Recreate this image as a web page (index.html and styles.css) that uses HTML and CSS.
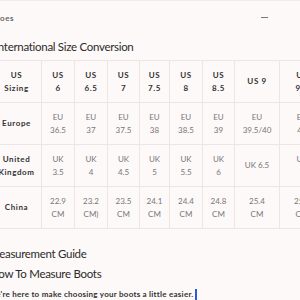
FILE: index.html
```html
<!DOCTYPE html>
<html>
<head>
<meta charset="utf-8">
<link rel="stylesheet" href="styles.css">
</head>
<body>
<div class="page">
  <div class="acc-head">
    <span class="acc-title">Shoes</span>
    <span class="minus"></span>
  </div>
  <h2 class="title t1">International Size Conversion</h2>
  <table class="sizes">
    <colgroup>
      <col style="width:50px"><col style="width:33px"><col style="width:33px"><col style="width:32px"><col style="width:30px"><col style="width:33px"><col style="width:32px"><col style="width:45px"><col style="width:45px">
    </colgroup>
    <tr class="hd">
      <th>US<br>Sizing</th><th>US<br>6</th><th>US<br>6.5</th><th>US<br>7</th><th>US<br>7.5</th><th>US<br>8</th><th>US<br>8.5</th><th>US 9</th><th>US<br>9.5</th>
    </tr>
    <tr>
      <th>Europe</th><td>EU<br>36.5</td><td>EU<br>37</td><td>EU<br>37.5</td><td>EU<br>38</td><td>EU<br>38.5</td><td>EU<br>39</td><td>EU<br>39.5/40</td><td>EU<br>40</td>
    </tr>
    <tr>
      <th>United<br>Kingdom</th><td>UK<br>3.5</td><td>UK<br>4</td><td>UK<br>4.5</td><td>UK<br>5</td><td>UK<br>5.5</td><td>UK<br>6</td><td>UK 6.5</td><td>UK<br>7</td>
    </tr>
    <tr>
      <th>China</th><td>22.9<br>CM</td><td>23.2<br>CM)</td><td>23.5<br>CM</td><td>24.1<br>CM</td><td>24.4<br>CM</td><td>24.8<br>CM</td><td>25.4<br>CM</td><td>25.7<br>CM</td>
    </tr>
  </table>
  <h2 class="title t2">Measurement Guide</h2>
  <h2 class="title t3">How To Measure Boots</h2>
  <p class="intro">We're here to make choosing your boots a little easier.<span class="caret"></span></p>
</div>
</body>
</html>
```
FILE: styles.css
```css
html, body {
  margin: 0;
  padding: 0;
  background: #fdf9f8;
  overflow: hidden;
}
body {
  width: 300px;
  height: 300px;
  font-family: Lato, "Open Sans", sans-serif;
}
.page {
  margin-left: -12px;
  width: 340px;
}
.acc-head {
  height: 34px;
  display: flex;
  align-items: center;
  justify-content: space-between;
  padding: 0 60px 0 2px;
  border-top: 1px solid #f1ebe9;
  box-sizing: border-box;
}
.acc-title {
  font-size: 8px;
  font-weight: 700;
  letter-spacing: 0.6px;
  color: #666;
}
.minus {
  width: 7px;
  height: 1px;
  background: #777;
}
.title {
  margin: 0;
  font-weight: 400;
  color: #2b2b2b;
  font-size: 11.5px;
  letter-spacing: -0.3px;
  line-height: 20px;
}
.t1 {
  padding: 3px 0 3px 7px;
}
.sizes {
  margin-left: 3px;
  border-collapse: collapse;
  table-layout: fixed;
  width: 333px;
}
.sizes th, .sizes td {
  border: 1px solid #ece5e3;
  text-align: center;
  font-size: 8px;
  line-height: 13px;
  padding: 7px 0;
  height: 27px;
}
.sizes th {
  font-weight: 700;
  letter-spacing: 0.6px;
  color: #333;
}
.sizes td {
  color: #777;
}
.t2 {
  margin-top: 15px;
  padding-left: 1px;
}
.t3 {
  padding-left: 2px;
}
.intro {
  margin: 0;
  font-size: 8px;
  font-weight: 700;
  letter-spacing: 0.25px;
  color: #333;
  line-height: 20px;
  padding-left: 0;
}
.caret {
  display: inline-block;
  width: 2px;
  height: 11px;
  background: #2a5bd7;
  vertical-align: middle;
  margin-left: 1px;
}
```
